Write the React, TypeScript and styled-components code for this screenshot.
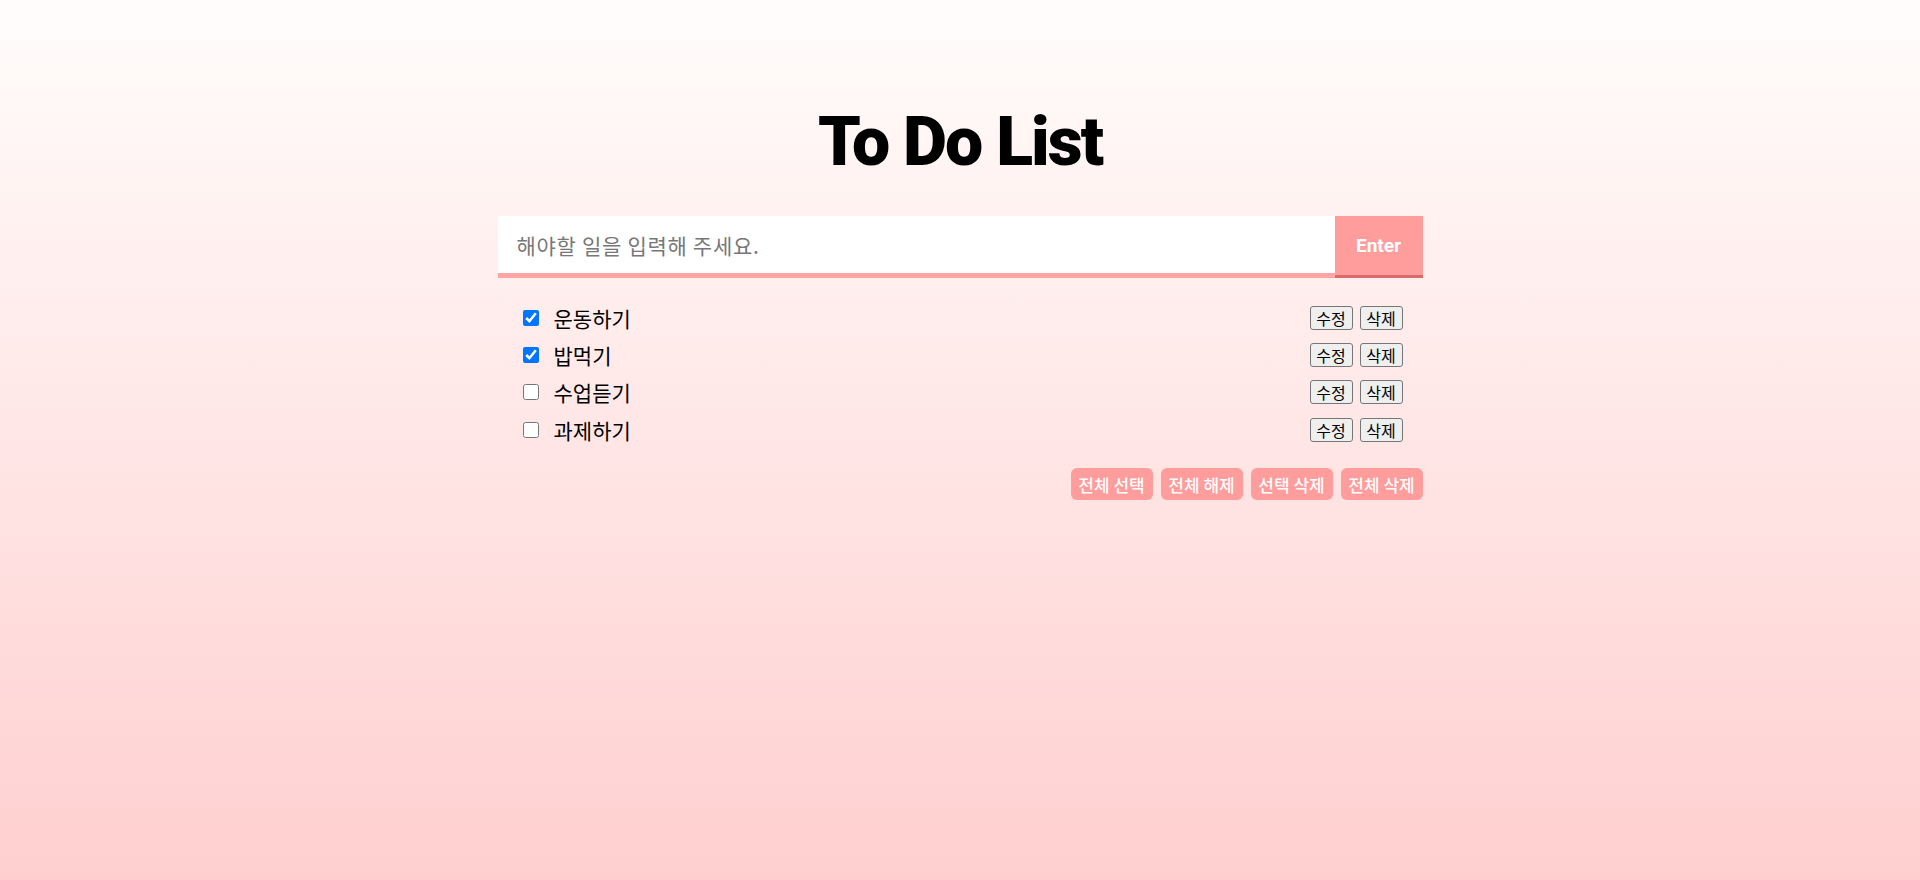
import React, { useState } from 'react';
import styled, { createGlobalStyle } from 'styled-components';

const GlobalStyle = createGlobalStyle`
	html, body {
		margin: 0;
		padding: 0;
	}
	body {
		min-height: 100vh;
		background: linear-gradient(to bottom, #fffdfc, #ffcfcf);
		font-family: 'Noto Sans CJK KR', 'Noto Sans', sans-serif;
	}
`;

const Page = styled.div`
	min-height: 100vh;
	display: flex;
	justify-content: center;
`;

const Wrapper = styled.div`
	width: 925px;
	padding-top: 108px;
	display: flex;
	flex-direction: column;
`;

const Title = styled.h1`
	margin: 0;
	height: 68px;
	font-family: Roboto, 'Noto Sans', sans-serif;
	font-size: 68px;
	font-weight: 900;
	line-height: 68px;
	letter-spacing: -2px;
	text-align: center;
	color: #000;
`;

const Form = styled.form`
	margin-top: 40px;
	height: 62px;
	display: flex;
`;

const Input = styled.input`
	flex: 1;
	box-sizing: border-box;
	height: 62px;
	border: none;
	border-bottom: 5px solid #ffa5a5;
	outline: none;
	background: #fff;
	padding: 0 19px;
	font-family: 'Noto Sans CJK KR', sans-serif;
	font-size: 21px;
	letter-spacing: 0.7px;
	color: #222;

	&::placeholder {
		color: #777;
	}
`;

const EnterButton = styled.button`
	width: 88px;
	box-sizing: border-box;
	height: 62px;
	border: none;
	border-bottom: 3px solid #d76a6a;
	background: #ff9d9d;
	color: #fff;
	font-family: Roboto, sans-serif;
	font-size: 19px;
	font-weight: 700;
	padding: 0;
	cursor: pointer;
`;

const List = styled.ul`
	list-style: none;
	margin: 21px 0 0;
	padding: 0 20px 0 25px;
`;

const Item = styled.li`
	height: 37.33px;
	display: flex;
	align-items: center;
`;

const Check = styled.input`
	width: 16px;
	height: 16px;
	margin: 0 15px 0 0;
`;

const Label = styled.span`
	flex: 1;
	font-size: 21px;
	color: #000;
`;

const SmallButton = styled.button`
	box-sizing: border-box;
	width: 43px;
	height: 24px;
	margin-left: 7px;
	padding: 0;
	border: 1px solid #767676;
	border-radius: 3px;
	background: #efefef;
	color: #000;
	font-family: 'Noto Sans CJK KR', sans-serif;
	font-size: 16px;
	line-height: 22px;
`;

const Actions = styled.div`
	margin-top: 20px;
	display: flex;
	justify-content: flex-end;
	gap: 8px;
`;

const ActionButton = styled.button`
	box-sizing: border-box;
	width: 82px;
	height: 32px;
	padding: 0;
	border: none;
	border-radius: 6px;
	background: #ff9c9c;
	color: #fff;
	font-family: 'Noto Sans CJK KR', sans-serif;
	font-size: 17px;
	font-weight: 500;
	cursor: pointer;
`;

interface Todo {
	id: number;
	text: string;
	done: boolean;
}

const initialTodos: Todo[] = [
	{ id: 1, text: '운동하기', done: true },
	{ id: 2, text: '밥먹기', done: true },
	{ id: 3, text: '수업듣기', done: false },
	{ id: 4, text: '과제하기', done: false },
];

export default function App() {
	const [todos, setTodos] = useState<Todo[]>(initialTodos);
	const [value, setValue] = useState('');

	const toggle = (id: number) =>
		setTodos(todos.map((t) => (t.id === id ? { ...t, done: !t.done } : t)));

	return (
		<Page>
			<GlobalStyle />
			<Wrapper>
				<Title>To Do List</Title>
				<Form onSubmit={(e) => e.preventDefault()}>
					<Input
						placeholder="해야할 일을 입력해 주세요."
						value={value}
						onChange={(e) => setValue(e.target.value)}
					/>
					<EnterButton type="submit">Enter</EnterButton>
				</Form>
				<List>
					{todos.map((todo) => (
						<Item key={todo.id}>
							<Check type="checkbox" checked={todo.done} onChange={() => toggle(todo.id)} />
							<Label>{todo.text}</Label>
							<SmallButton>수정</SmallButton>
							<SmallButton>삭제</SmallButton>
						</Item>
					))}
				</List>
				<Actions>
					<ActionButton>전체 선택</ActionButton>
					<ActionButton>전체 해제</ActionButton>
					<ActionButton>선택 삭제</ActionButton>
					<ActionButton>전체 삭제</ActionButton>
				</Actions>
			</Wrapper>
		</Page>
	);
}
